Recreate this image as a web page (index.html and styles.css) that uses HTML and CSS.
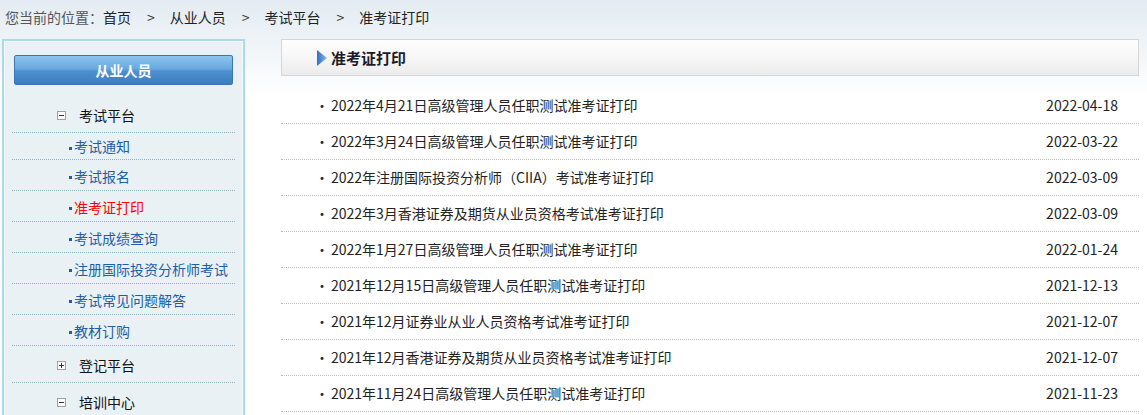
FILE: index.html
```html
<!DOCTYPE html>
<html lang="zh-CN">
<head>
<meta charset="utf-8">
<title>准考证打印</title>
<link rel="stylesheet" href="styles.css">
</head>
<body>
<div class="crumbs">
  <span class="crumb-label">您当前的位置：</span><a>首页</a><span class="sep">&gt;</span><a>从业人员</a><span class="sep">&gt;</span><a>考试平台</a><span class="sep">&gt;</span><a>准考证打印</a>
</div>
<div class="layout">
  <aside class="sidebar">
    <div class="side-title">从业人员</div>
    <ul class="menu">
      <li class="menu-item"><span class="toggle minus"></span>考试平台</li>
      <li class="sub-item">考试通知</li>
      <li class="sub-item">考试报名</li>
      <li class="sub-item active">准考证打印</li>
      <li class="sub-item">考试成绩查询</li>
      <li class="sub-item">注册国际投资分析师考试</li>
      <li class="sub-item">考试常见问题解答</li>
      <li class="sub-item">教材订购</li>
      <li class="menu-item"><span class="toggle plus"></span>登记平台</li>
      <li class="menu-item"><span class="toggle minus"></span>培训中心</li>
    </ul>
  </aside>
  <main class="content">
    <div class="panel-head">
      <svg class="arrow" width="10" height="16" viewBox="0 0 10 16">
        <defs>
          <linearGradient id="ag" x1="0" y1="0" x2="1" y2="0">
            <stop offset="0" stop-color="#2f6fc4"/>
            <stop offset="1" stop-color="#8ab8ec"/>
          </linearGradient>
        </defs>
        <polygon points="0,0 10,8 0,16" fill="url(#ag)"/>
      </svg>
      <h2 class="panel-title">准考证打印</h2>
    </div>
    <ul class="news">
      <li class="news-row"><span class="dot">·</span><span class="news-title">2022年4月21日高级管理人员任职测试准考证打印</span><span class="news-date">2022-04-18</span></li>
      <li class="news-row"><span class="dot">·</span><span class="news-title">2022年3月24日高级管理人员任职测试准考证打印</span><span class="news-date">2022-03-22</span></li>
      <li class="news-row"><span class="dot">·</span><span class="news-title">2022年注册国际投资分析师（CIIA）考试准考证打印</span><span class="news-date">2022-03-09</span></li>
      <li class="news-row"><span class="dot">·</span><span class="news-title">2022年3月香港证券及期货从业员资格考试准考证打印</span><span class="news-date">2022-03-09</span></li>
      <li class="news-row"><span class="dot">·</span><span class="news-title">2022年1月27日高级管理人员任职测试准考证打印</span><span class="news-date">2022-01-24</span></li>
      <li class="news-row"><span class="dot">·</span><span class="news-title">2021年12月15日高级管理人员任职测试准考证打印</span><span class="news-date">2021-12-13</span></li>
      <li class="news-row"><span class="dot">·</span><span class="news-title">2021年12月证券业从业人员资格考试准考证打印</span><span class="news-date">2021-12-07</span></li>
      <li class="news-row"><span class="dot">·</span><span class="news-title">2021年12月香港证券及期货从业员资格考试准考证打印</span><span class="news-date">2021-12-07</span></li>
      <li class="news-row"><span class="dot">·</span><span class="news-title">2021年11月24日高级管理人员任职测试准考证打印</span><span class="news-date">2021-11-23</span></li>
    </ul>
  </main>
</div>
</body>
</html>
```
FILE: styles.css
```css
html, body {
  margin: 0;
  padding: 0;
}
body {
  font-family: "Noto Sans CJK SC", sans-serif;
  font-size: 14px;
  color: #222;
  background: linear-gradient(to bottom, #e3ecf2 0px, #eef3f7 40px, #ffffff 95px) no-repeat;
  background-color: #fff;
  overflow: hidden;
}
ul {
  list-style: none;
  margin: 0;
  padding: 0;
}

/* breadcrumb */
.crumbs {
  height: 35px;
  line-height: 35px;
  padding-left: 5px;
  white-space: nowrap;
}
.crumb-label {
  color: #555;
}
.crumbs a {
  color: #222;
}
.crumbs .sep {
  display: inline-block;
  margin: 0 15px 0 16px;
  color: #333;
}

/* layout */
.layout {
  display: flex;
  align-items: flex-start;
  padding-top: 4px;
}

/* sidebar */
.sidebar {
  box-sizing: border-box;
  width: 243px;
  height: 400px;
  margin-left: 2px;
  padding: 14px 8px 0 8px;
  border: 2px solid #aadbe7;
  box-shadow: inset 0 0 0 1px #f4fafc;
  background: #e9f1f5;
}
.side-title {
  margin: 0 2px 11px 2px;
  height: 28px;
  line-height: 28px;
  border: 1px solid #3b77ae;
  border-radius: 2px;
  background: linear-gradient(to bottom, #8cc4ef 0%, #6aa9e0 45%, #4d8fcf 55%, #3c7dbd 100%);
  color: #fff;
  font-weight: bold;
  text-align: center;
}
.menu-item {
  display: flex;
  align-items: center;
  height: 34px;
  line-height: 34px;
  padding-top: 2px;
  padding-left: 45px;
  border-bottom: 1px dotted #8fb0c2;
  color: #111;
}
.toggle {
  position: relative;
  box-sizing: border-box;
  width: 9px;
  height: 9px;
  margin-right: 13px;
  border: 1px solid #a0a0a0;
  background: #fff;
}
.toggle::before {
  content: "";
  position: absolute;
  left: 1px;
  top: 3px;
  width: 5px;
  height: 1px;
  background: #333;
}
.toggle.plus::after {
  content: "";
  position: absolute;
  left: 3px;
  top: 1px;
  width: 1px;
  height: 5px;
  background: #333;
}
.sub-item {
  position: relative;
  height: 27px;
  line-height: 27px;
  padding-top: 3px;
  padding-left: 62px;
  border-bottom: 1px dotted #8fb0c2;
  color: #1f5ea6;
  white-space: nowrap;
}
.menu-item + .sub-item {
  padding-top: 0;
  height: 26px;
}
.sub-item::before {
  content: "";
  position: absolute;
  left: 57px;
  top: 50%;
  margin-top: 1px;
  width: 3px;
  height: 3px;
  background: #1f5ea6;
}
.sub-item.active {
  color: #ff0000;
}

/* content */
.content {
  width: 858px;
  margin-left: 36px;
}
.panel-head {
  box-sizing: border-box;
  height: 37px;
  display: flex;
  align-items: center;
  padding-left: 35px;
  border: 1px solid #d6d6d6;
  background: linear-gradient(to bottom, #ffffff 0%, #f6f6f6 50%, #ececec 100%);
}
.arrow {
  display: block;
  margin-right: 4px;
  margin-top: 1px;
}
.panel-title {
  margin: 0;
  font-size: 15px;
  font-weight: bold;
  color: #1a1a2a;
}
.news {
  margin-top: 12px;
}
.news-row {
  display: flex;
  align-items: center;
  height: 35px;
  line-height: 35px;
  border-bottom: 1px dotted #bdbdbd;
  padding: 0 21px 0 34px;
  color: #222;
}
.dot {
  width: 16px;
}
.news-title {
  flex: 1;
  white-space: nowrap;
  font-family: "Noto Sans CJK JP", sans-serif;
}
.news-date {
  color: #222;
}
```
